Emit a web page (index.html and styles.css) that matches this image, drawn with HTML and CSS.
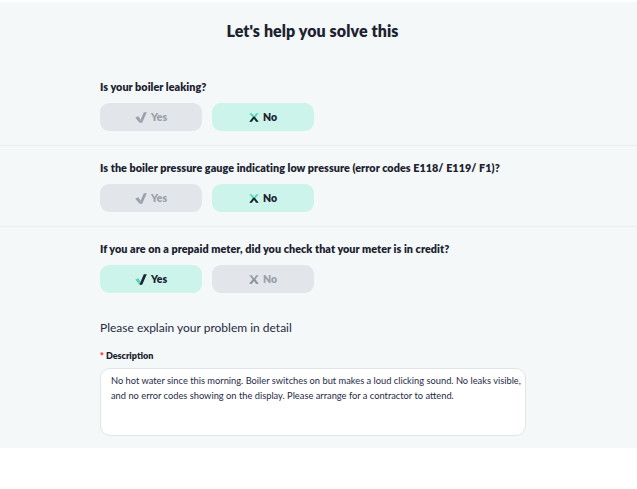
FILE: index.html
```html
<!DOCTYPE html>
<html lang="en">
<head>
<meta charset="utf-8">
<title>Let's help you solve this</title>
<link rel="stylesheet" href="styles.css">
</head>
<body>
<div class="page">
  <header class="header">
    <div class="inner"><h1 class="title">Let's help you solve this</h1></div>
  </header>

  <section class="block">
    <div class="inner">
      <p class="question">Is your boiler leaking?</p>
      <div class="choices">
        <button class="choice">
          <svg class="ico" viewBox="0 0 12 11"><path class="c-a" d="M0.3 5.4 L3.4 4.2 L5.6 7.8 L4.4 10.8 Z"/><path class="c-b" d="M4.4 10.8 L8.8 0.3 L11.8 0.3 L7.2 10.8 Z"/></svg>
          <span>Yes</span>
        </button>
        <button class="choice on">
          <svg class="ico x" viewBox="0 0 11 10"><path class="x-a" d="M0.3 0.3 H3.1 L5.5 3.6 L7.9 0.3 H10.7 L7 5 L10.7 9.7 H7.9 L5.5 6.4 L3.1 9.7 H0.3 L4 5 Z"/><path class="x-b" d="M5.5 3.6 L7 5 L10.7 9.7 H7.9 L5.5 6.4 L3.1 9.7 H0.3 L4 5 Z"/></svg>
          <span>No</span>
        </button>
      </div>
    </div>
  </section>

  <section class="block">
    <div class="inner">
      <p class="question">Is the boiler pressure gauge indicating low pressure (error codes E118/ E119/ F1)?</p>
      <div class="choices">
        <button class="choice">
          <svg class="ico" viewBox="0 0 12 11"><path class="c-a" d="M0.3 5.4 L3.4 4.2 L5.6 7.8 L4.4 10.8 Z"/><path class="c-b" d="M4.4 10.8 L8.8 0.3 L11.8 0.3 L7.2 10.8 Z"/></svg>
          <span>Yes</span>
        </button>
        <button class="choice on">
          <svg class="ico x" viewBox="0 0 11 10"><path class="x-a" d="M0.3 0.3 H3.1 L5.5 3.6 L7.9 0.3 H10.7 L7 5 L10.7 9.7 H7.9 L5.5 6.4 L3.1 9.7 H0.3 L4 5 Z"/><path class="x-b" d="M5.5 3.6 L7 5 L10.7 9.7 H7.9 L5.5 6.4 L3.1 9.7 H0.3 L4 5 Z"/></svg>
          <span>No</span>
        </button>
      </div>
    </div>
  </section>

  <section class="block last">
    <div class="inner">
      <p class="question">If you are on a prepaid meter, did you check that your meter is in credit?</p>
      <div class="choices">
        <button class="choice on">
          <svg class="ico" viewBox="0 0 12 11"><path class="c-a" d="M0.3 5.4 L3.4 4.2 L5.6 7.8 L4.4 10.8 Z"/><path class="c-b" d="M4.4 10.8 L8.8 0.3 L11.8 0.3 L7.2 10.8 Z"/></svg>
          <span>Yes</span>
        </button>
        <button class="choice">
          <svg class="ico x" viewBox="0 0 11 10"><path class="x-a" d="M0.3 0.3 H3.1 L5.5 3.6 L7.9 0.3 H10.7 L7 5 L10.7 9.7 H7.9 L5.5 6.4 L3.1 9.7 H0.3 L4 5 Z"/><path class="x-b" d="M5.5 3.6 L7 5 L10.7 9.7 H7.9 L5.5 6.4 L3.1 9.7 H0.3 L4 5 Z"/></svg>
          <span>No</span>
        </button>
      </div>

      <p class="explain">Please explain your problem in detail</p>
      <label class="label" for="desc"><span class="req">*</span> Description</label>
      <textarea id="desc" class="textarea">No hot water since this morning. Boiler switches on but makes a loud clicking sound. No leaks visible, and no error codes showing on the display. Please arrange for a contractor to attend.</textarea>
    </div>
  </section>
</div>
</body>
</html>
```

FILE: styles.css
```css
* { box-sizing: border-box; }

html, body {
  margin: 0;
  padding: 0;
  background: #ffffff;
}

body {
  font-family: Lato, "Open Sans", Arial, sans-serif;
  color: #1c2230;
  padding-top: 2px;
}

.page {
  background: #f5f8f9;
}

.inner {
  margin-left: 100px;
  width: 425px;
}

.header {
  padding: 19px 0 0;
}

.title {
  margin: 0;
  text-align: center;
  font-size: 16px;
  line-height: 20px;
  font-weight: 800;
  color: #1c2230;
  letter-spacing: 0.1px;
}

.block {
  padding: 15px 0 14px;
  border-bottom: 1px solid #e9eef0;
}

.header + .block {
  padding-top: 39px;
}

.block.last {
  border-bottom: 0;
  padding-top: 15px;
  padding-bottom: 12px;
}

.question {
  margin: 0 0 9px;
  font-size: 10.8px;
  line-height: 14px;
  font-weight: 800;
  color: #1c2230;
  letter-spacing: 0.05px;
}

.choices {
  display: flex;
  gap: 10px;
}

.choice {
  width: 102px;
  height: 28px;
  border: 0;
  border-radius: 9px;
  background: #e2e5e9;
  color: #9aa0a9;
  font-family: inherit;
  font-size: 10.5px;
  font-weight: 800;
  display: flex;
  align-items: center;
  justify-content: center;
  gap: 4px;
  padding: 0;
}

.choice.on {
  background: #cdf4ea;
  color: #1c2230;
}

.ico {
  width: 12px;
  height: 11px;
  display: block;
}

.ico.x {
  width: 10px;
  height: 9px;
}

.choice .c-a, .choice .c-b, .choice .x-a, .choice .x-b { fill: #9ba1aa; }
.choice .x-b { fill: #8e949d; }
.choice.on .c-a { fill: #54d6b6; }
.choice.on .c-b { fill: #1c2230; }
.choice.on .x-a { fill: #54d6b6; }
.choice.on .x-b { fill: #1c2230; }

.explain {
  margin: 27px 0 0;
  font-size: 12px;
  line-height: 16px;
  color: #1f2a44;
}

.label {
  display: block;
  margin-top: 14px;
  font-size: 9px;
  line-height: 12px;
  font-weight: 800;
  color: #1c2230;
}

.req {
  color: #e5322d;
}

.textarea {
  display: block;
  margin-top: 6px;
  width: 426px;
  height: 68px;
  border: 1px solid #e1e5e9;
  border-radius: 10px;
  background: #ffffff;
  padding: 4px 4px 5px 10px;
  font-family: inherit;
  font-size: 9.3px;
  line-height: 15px;
  color: #1f2a44;
  resize: none;
  overflow: hidden;
}
```
